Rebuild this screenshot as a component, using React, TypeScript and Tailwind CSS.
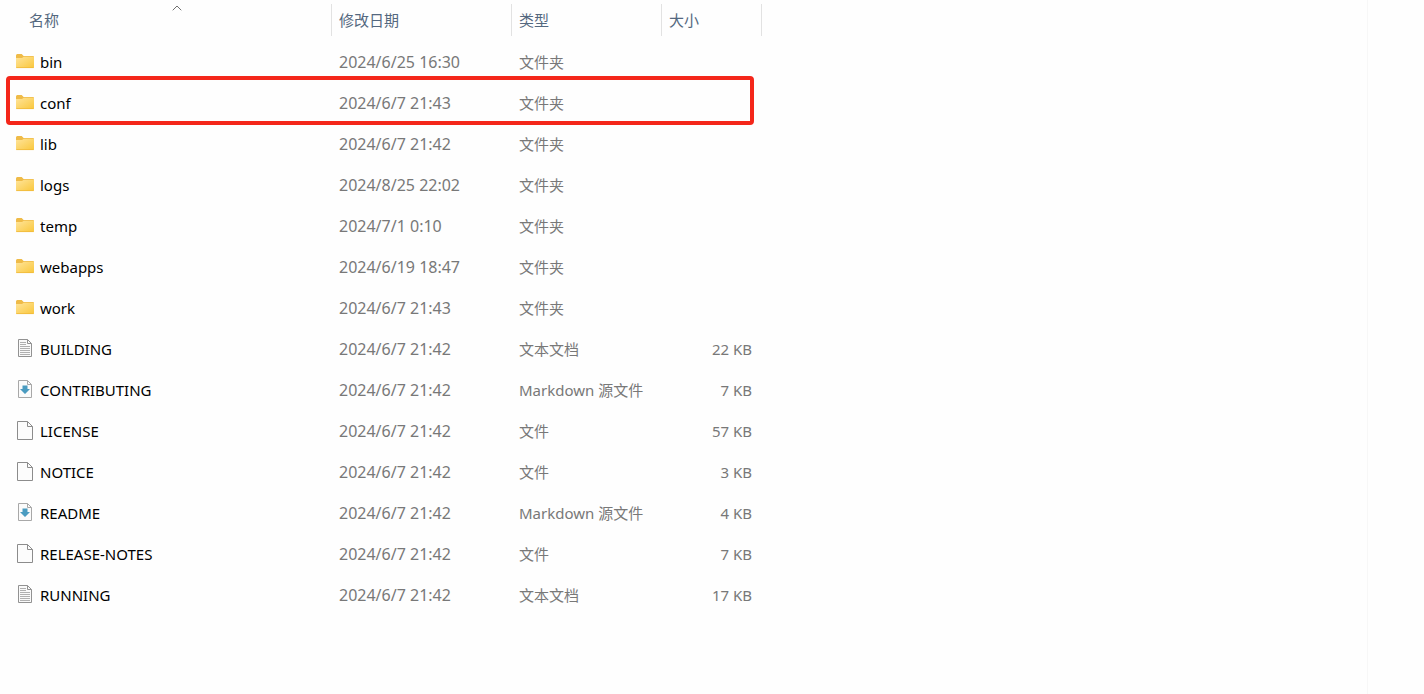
import * as React from 'react'
import clsx from 'clsx'
import { ChevronUp } from 'lucide-react'

type Kind = 'folder' | 'text' | 'markdown' | 'file'

interface Entry {
  name: string
  modified: string
  kind: Kind
  size?: string
  marked?: boolean
}

const TYPE_LABEL: Record<Kind, string> = {
  folder: '文件夹',
  text: '文本文档',
  markdown: 'Markdown 源文件',
  file: '文件',
}

const ENTRIES: Entry[] = [
  { name: 'bin', modified: '2024/6/25 16:30', kind: 'folder' },
  { name: 'conf', modified: '2024/6/7 21:43', kind: 'folder', marked: true },
  { name: 'lib', modified: '2024/6/7 21:42', kind: 'folder' },
  { name: 'logs', modified: '2024/8/25 22:02', kind: 'folder' },
  { name: 'temp', modified: '2024/7/1 0:10', kind: 'folder' },
  { name: 'webapps', modified: '2024/6/19 18:47', kind: 'folder' },
  { name: 'work', modified: '2024/6/7 21:43', kind: 'folder' },
  { name: 'BUILDING', modified: '2024/6/7 21:42', kind: 'text', size: '22 KB' },
  { name: 'CONTRIBUTING', modified: '2024/6/7 21:42', kind: 'markdown', size: '7 KB' },
  { name: 'LICENSE', modified: '2024/6/7 21:42', kind: 'file', size: '57 KB' },
  { name: 'NOTICE', modified: '2024/6/7 21:42', kind: 'file', size: '3 KB' },
  { name: 'README', modified: '2024/6/7 21:42', kind: 'markdown', size: '4 KB' },
  { name: 'RELEASE-NOTES', modified: '2024/6/7 21:42', kind: 'file', size: '7 KB' },
  { name: 'RUNNING', modified: '2024/6/7 21:42', kind: 'text', size: '17 KB' },
]

function FolderIcon() {
  return (
    <svg viewBox="0 0 20 20" className="size-5 shrink-0" aria-hidden="true">
      <defs>
        <linearGradient id="folder-front" x1="0" y1="0" x2="1" y2="1">
          <stop offset="0" stopColor="#ffe49a" />
          <stop offset="1" stopColor="#f9c73c" />
        </linearGradient>
      </defs>
      <path d="M1 3.5Q1 2 2.3 2H6.7L8.6 4H18Q19 4 19 5V8H1Z" fill="#efbb48" />
      <path d="M1 6H7L8.8 4.8H18.2Q19 4.8 19 5.6V15Q19 16 18 16H2Q1 16 1 15Z" fill="url(#folder-front)" />
      <path d="M1.2 15.6H18.8" stroke="#efb738" strokeWidth="0.8" />
    </svg>
  )
}

function TextIcon() {
  return (
    <svg viewBox="0 0 20 20" className="size-5 shrink-0" fill="none" aria-hidden="true">
      <path d="M3.5 0.5H12.5L16.5 4.5V17.5H3.5Z" fill="#fafafa" stroke="#929292" />
      <path d="M12.5 0.5V4.5H16.5" stroke="#929292" />
      <path
        d="M5 3.5H11M5 5.5H11M5 7.5H15M5 9.5H15M5 11.5H15M5 13.5H15M5 15.5H15"
        stroke="#b0b0b0"
      />
    </svg>
  )
}

function MarkdownIcon() {
  return (
    <svg viewBox="0 0 20 20" className="size-5 shrink-0" fill="none" aria-hidden="true">
      <path d="M3.5 0.5H12.5L16.5 4.5V17.5H3.5Z" fill="#fbfbfb" stroke="#a8a8a8" />
      <path d="M12.5 0.5V4.5H16.5" stroke="#a8a8a8" />
      <path d="M7.5 5.5H12.5V9H15L10 14L5 9H7.5Z" fill="#4a9bc0" />
    </svg>
  )
}

function FileIcon() {
  return (
    <svg viewBox="0 0 20 20" className="size-5 shrink-0" fill="none" aria-hidden="true">
      <path d="M2.5 0.5H12.5L17.5 5.5V18.5H2.5Z" fill="#fcfcfc" stroke="#8c8c8c" />
      <path d="M12.5 0.5V5.5H17.5" stroke="#8c8c8c" />
    </svg>
  )
}

const ICONS: Record<Kind, () => React.JSX.Element> = {
  folder: FolderIcon,
  text: TextIcon,
  markdown: MarkdownIcon,
  file: FileIcon,
}

const FONT = 'font-[Noto_Sans,Noto_Sans_CJK_SC,sans-serif]'

function HeaderCell({ label, sorted }: { label: string; sorted?: boolean }) {
  return (
    <th scope="col" aria-sort={sorted ? 'ascending' : undefined} className="relative p-0 pt-1 pb-[5px] font-normal">
      <button
        type="button"
        className={clsx(
          'flex h-8 w-full items-center border-r border-[#e2e2e2] text-left',
          sorted ? 'pl-[29px]' : 'pl-[7px]',
        )}
      >
        {label}
      </button>
      {sorted && (
        <ChevronUp
          className="absolute top-0 left-[169px] size-4 text-[#707070]"
          strokeWidth={1.5}
          aria-hidden="true"
        />
      )}
    </th>
  )
}

function EntryRow({ entry }: { entry: Entry }) {
  const Icon = ICONS[entry.kind]

  return (
    <tr className="h-[41px]">
      <td className="relative p-0 pl-[15px] text-black">
        <div className="flex items-center gap-[5px]">
          <Icon />
          <span>{entry.name}</span>
        </div>
        {entry.marked && (
          <div className="pointer-events-none absolute -top-1.5 left-1.5 h-[49px] w-[748px] rounded-sm border-4 border-[#f4261a]" />
        )}
      </td>
      <td className="p-0 pl-[7px] text-base leading-5">{entry.modified}</td>
      <td className="p-0 pl-[7px]">{TYPE_LABEL[entry.kind]}</td>
      <td className="p-0 pr-2.5 text-right">{entry.size}</td>
    </tr>
  )
}

export default function App() {
  return (
    <div className={clsx('flex min-h-screen bg-[#fefefe] text-[15px] leading-5 text-[#787878]', FONT)}>
      <main className="min-w-0 flex-1">
        <table className="w-[762px] table-fixed border-collapse whitespace-nowrap">
          <colgroup>
            <col className="w-[332px]" />
            <col className="w-[180px]" />
            <col className="w-[150px]" />
            <col className="w-[100px]" />
          </colgroup>
          <thead className="text-[#54687f]">
            <tr>
              <HeaderCell label="名称" sorted />
              <HeaderCell label="修改日期" />
              <HeaderCell label="类型" />
              <HeaderCell label="大小" />
            </tr>
          </thead>
          <tbody>
            {ENTRIES.map((entry) => (
              <EntryRow key={entry.name} entry={entry} />
            ))}
          </tbody>
        </table>
      </main>
      <aside className="w-[57px] shrink-0 border-l border-[#f7f7f7]" />
    </div>
  )
}
